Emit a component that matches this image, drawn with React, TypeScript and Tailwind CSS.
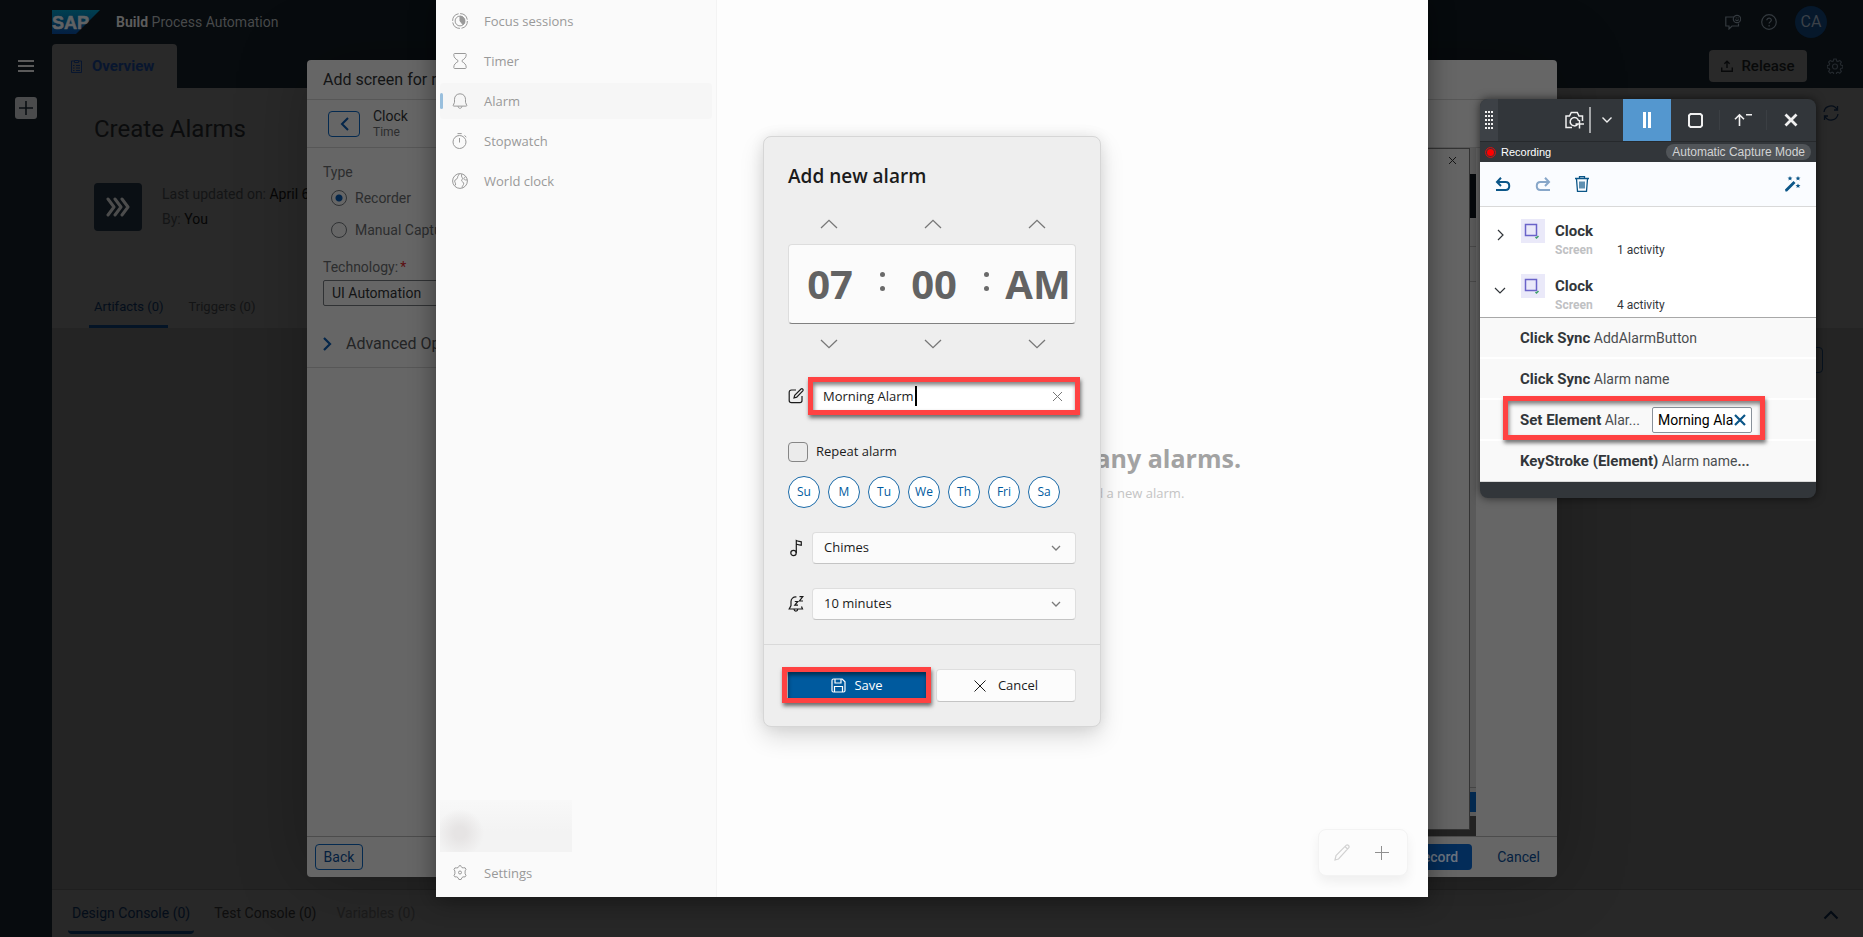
import React from "react";

type IconProps = { className?: string; w: number; h: number; sw?: number; fill?: boolean; children: React.ReactNode };

function Svg({ className = "", w, h, sw = 1, fill = false, children }: IconProps) {
  return (
    <svg
      aria-hidden="true"
      className={className}
      width={w}
      height={h}
      viewBox={`0 0 ${w} ${h}`}
      fill={fill ? "currentColor" : "none"}
      stroke={fill ? "none" : "currentColor"}
      strokeWidth={sw}
    >
      {children}
    </svg>
  );
}

const gearPath =
  "M6.8 1h2.4l.5 2 1.2.5 1.8-1.1 1.7 1.7-1.1 1.8.5 1.2 2 .5v2.4l-2 .5-.5 1.2 1.1 1.8-1.7 1.7-1.8-1.1-1.2.5-.5 2H6.8l-.5-2-1.2-.5-1.8 1.1-1.7-1.7 1.1-1.8-.5-1.2-2-.5V7.600l2-.5.5-1.200-1.100-1.800 1.700-1.700 1.800 1.100 1.200-.5z";

function SapLogo() {
  return (
    <svg width="48" height="24" viewBox="0 0 48 24" role="img" aria-label="SAP">
      <defs>
        <linearGradient id="sap" x1="0" y1="0" x2="0" y2="1">
          <stop offset="0" stopColor="#003f50" />
          <stop offset="1" stopColor="#041f42" />
        </linearGradient>
      </defs>
      <path d="M0 0H48L24 24H0Z" fill="url(#sap)" />
      <text x="0" y="19" fontFamily="Liberation Sans, Arial, sans-serif" fontWeight="700" fontSize="18" fill="#606264" stroke="#606264" strokeWidth=".6">
        SAP
      </text>
    </svg>
  );
}

function AppHeader() {
  return (
    <header className="flex h-[44px] items-center pr-[36px]">
      <SapLogo />
      <p className="ml-4 flex-1 text-sm text-[#484a4b]">
        <b className="text-[#5c5c5c]">Build</b> Process Automation
      </p>
      <div className="flex items-center text-[#343a3f]">
        <button aria-label="Feedback" className="mr-5">
          <Svg w={16} h={16} sw={1.2}>
            <path d="M9 3H.8v9H4v3l3-3h6.500V9.500" />
            <circle cx="12" cy="5" r="3.700" />
            <path d="M10.300 5.500c.8 1.500 2.600 1.500 3.400 0M10.800 3.900h.8M12.700 3.900h.8" />
          </Svg>
        </button>
        <button aria-label="Help" className="mr-[18px]">
          <Svg w={16} h={16} sw={1.2}>
            <circle cx="8" cy="8" r="7.300" />
            <path d="M5.800 6.300c0-3 4.600-2.900 4.500-.1 0 1.700-2.200 1.700-2.200 3.400M8.100 11v1.500" />
          </Svg>
        </button>
        <button className="h-8 w-8 rounded-full bg-[#06182b] text-base text-[#3b4148]">CA</button>
      </div>
    </header>
  );
}

function SideRail() {
  return (
    <nav className="flex w-[52px] shrink-0 flex-col items-center pt-[60px]">
      <button aria-label="Menu" className="text-[#5a5a5a]">
        <Svg w={16} h={12} fill>
          <path d="M0 0h16v2H0zM0 5h16v2H0zM0 10h16v2H0z" />
        </Svg>
      </button>
      <button aria-label="Create" className="mt-[25px] flex h-[22px] w-[22px] items-center justify-center rounded-[3px] bg-[#4a4b4c] text-[#0a0f13]">
        <Svg w={14} h={14} sw={1.600}>
          <path d="M7 0v14M0 7h14" />
        </Svg>
      </button>
    </nav>
  );
}

function ProjectPage() {
  return (
    <div className="flex min-h-screen bg-[#070b0e] font-['Roboto',sans-serif]">
      <SideRail />
      <div className="flex min-w-0 flex-1 flex-col">
        <AppHeader />
        <div className="flex h-[44px] items-center justify-between pr-5">
          <a href="#overview" className="flex h-full w-[125px] items-center gap-[10px] rounded-t-[4px] bg-[#292929] pl-[19px] text-[15px] font-bold text-[#08162f]">
            <Svg w={11} h={14}>
              <path d="M3 2H.5v11.500h10V2H8M3.500 1.500h4v2h-4zM5 6.500h4M5 9h4M5 11.500h4M2 6.500h1.500M2 9h1.500M2 11.500h1.500" />
            </Svg>
            Overview
          </a>
          <div className="flex items-center gap-5 text-[#23282d]">
            <button className="flex h-8 w-[98px] items-center justify-center gap-2 rounded-[4px] bg-[#292929] text-[15px] font-medium text-[#08090a]">
              <Svg w={12} h={12} sw={1.400}>
                <path d="M.7 7.500v3.800h10.600V7.500M6 8V1.200M3.400 3.800L6 1.200l2.600 2.600" />
              </Svg>
              Release
            </button>
            <button aria-label="Project settings">
              <Svg w={16} h={16} sw={1.200}>
                <path d={gearPath} />
                <circle cx="8" cy="8.500" r="2.500" />
              </Svg>
            </button>
          </div>
        </div>
        <main className="flex flex-1 flex-col bg-[#242424]">
          <section className="flex h-[240px] flex-col bg-[#292929] pl-[42px] pr-6">
            <div className="mt-[25px] flex items-start justify-between">
              <h1 className="text-2xl leading-8 text-[#0b0c0d]">Create Alarms</h1>
              <button aria-label="Refresh" className="-mt-2 text-[#060e19]">
                <Svg w={16} h={16} sw={1.300}>
                  <path d="M1 7a7 7 0 0 1 13-2.500M14.500 1v4H11M15 9a7 7 0 0 1-13 2.500M1.500 15v-4H5" />
                </Svg>
              </button>
            </div>
            <div className="mt-[38px] flex gap-5">
              <div className="flex h-12 w-12 items-center justify-center rounded-[4px] bg-[#0a0f14] text-[#4c4c4c]">
                <Svg w={26} h={20} sw={3}>
                  <path d="M3 2l6 8-6 8M10 2l6 8-6 8M17 2l6 8-6 8" strokeLinecap="round" strokeLinejoin="round" />
                </Svg>
              </div>
              <div className="text-sm leading-[25px] text-[#141516]">
                <p className="-mt-px">Last updated on: <span className="text-[#060606]">April 6, 2023</span></p>
                <p>By: <span className="text-[#060606]">You</span></p>
              </div>
            </div>
            <div className="mt-auto flex gap-5 text-[13px] leading-6 text-[#131415]">
              <a href="#artifacts" className="-ml-[5px] h-[33px] border-b-[3px] border-[#041426] px-[5px] text-[#040e1b]">Artifacts (0)</a>
              <a href="#triggers" className="h-[33px]">Triggers (0)</a>
            </div>
          </section>
          <div className="flex justify-end pr-10 pt-[19px]">
            <button aria-label="Create artifact" className="h-[26px] w-20 rounded-[4px] border border-[#07121f]" />
          </div>
        </main>
        <footer className="flex h-12 items-start gap-5 border-t border-[#1f1f1f] bg-[#282828] pl-[16px] pr-6 text-sm">
          <a href="#design" className="h-[44px] rounded-b-sm border-b-[3px] border-[#03111f] px-1 pt-[13px] text-[#040d19]">Design Console (0)</a>
          <a href="#test" className="pt-[13px] text-[#0e0e0e]">Test Console (0)</a>
          <span className="flex-1 pt-[13px] text-[#1b1b1b]">Variables (0)</span>
          <button aria-label="Expand console" className="mt-5 text-[#030a13]">
            <Svg w={16} h={10} sw={2}>
              <path d="M1.500 8.500L8 2l6.500 6.500" />
            </Svg>
          </button>
        </footer>
      </div>
    </div>
  );
}

function ScreenDialog() {
  return (
    <section
      aria-label="Add screen"
      className="absolute bottom-[60px] left-[307px] right-[306px] top-[60px] flex flex-col rounded-[4px] bg-[#666666] font-['Roboto',sans-serif] text-sm text-[#2c2d2e] shadow-[0_0_70px_rgba(0,0,0,0.25)]"
    >
      <h2 className="flex h-10 items-center border-b border-[#575757] pl-4 text-base text-[#131415]">Add screen for recorder</h2>
      <div className="flex h-12 items-center gap-[13px] border-b border-[#575757] pl-[21px]">
        <button aria-label="Previous" className="flex h-[26px] w-8 items-center justify-center rounded-[4px] border border-[#042a50] text-[#04264a]">
          <Svg w={9} h={14} sw={2}>
            <path d="M8 1L2 7l6 6" />
          </Svg>
        </button>
        <div>
          <p className="leading-4 text-[#131415]">Clock</p>
          <p className="text-xs leading-4">Time</p>
        </div>
      </div>
      <div className="flex min-h-0 flex-1">
        <div className="w-[420px]">
          <form className="flex h-[220px] flex-col border-b border-[#575757] pl-4 pt-[14px]">
            <p className="leading-5">Type</p>
            <label className="mt-2 flex h-4 items-center gap-2 pl-2">
              <input type="radio" name="type" defaultChecked className="h-4 w-4 appearance-none rounded-full border border-[#303234] bg-[radial-gradient(circle,#04264a_3px,transparent_4px)]" />
              Recorder
            </label>
            <label className="mt-4 flex h-4 items-center gap-2 pl-2">
              <input type="radio" name="type" className="h-4 w-4 appearance-none rounded-full border border-[#303234]" />
              Manual Capture
            </label>
            <label htmlFor="technology" className="mt-[19px] leading-5">
              Technology:<span className="ml-[2px] text-[#5b0d10]">*</span>
            </label>
            <select id="technology" className="mt-[3px] h-[26px] w-[300px] appearance-none rounded-[2px] border border-[#303234] pl-2 text-[#131415]">
              <option>UI Automation</option>
            </select>
            <button type="button" className="mt-[26px] flex items-center gap-[14px] text-base leading-6 text-[#232425]">
              <Svg w={9} h={16} sw={2.200} className="text-[#04264a]">
                <path d="M1 2l6 6-6 6" />
              </Svg>
              Advanced Options
            </button>
          </form>
        </div>
        <div className="mr-[81px] flex flex-1 bg-[#222222]">
          <div className="mb-[6px] flex flex-1 justify-end border-b border-r border-t border-[#333] bg-[#646464] pr-3 pt-[7px] text-[#151515]">
            <Svg w={9} h={9}>
              <path d="M1 1l7 7M8 1L1 8" />
            </Svg>
          </div>
          <div className="flex w-[6px] flex-col bg-[#5a5a5a]">
            <div className="h-[26px]" />
            <div className="h-[44px] bg-[#05080b]" />
            <div className="h-[29px] border-b border-[#484848]" />
            <div className="h-[35px] border-b border-[#484848]" />
            <div className="flex-1 border-b border-[#454545]" />
            <div className="my-1 h-5 bg-[#03294f]" />
            <div className="h-5 bg-[#222222]" />
          </div>
        </div>
      </div>
      <div className="flex h-[41px] items-center border-t border-[#4c4c4c] pb-1 pl-2 pr-2">
        <button className="mt-1 h-[26px] w-12 rounded-[4px] border border-[#042a50] text-[#04203f]">Back</button>
        <button className="ml-auto mt-1 h-[26px] w-[72px] rounded-[4px] bg-[#032c59] font-medium text-[#6b7480]">Record</button>
        <button className="ml-4 mt-1 h-[26px] w-[61px] text-[#04203f]">Cancel</button>
      </div>
    </section>
  );
}

const navItems = [
  {
    label: "Focus sessions",
    icon: (
      <Svg w={16} h={16}>
        <circle cx="8" cy="8" r="7.400" strokeDasharray="10 1.600" />
        <circle cx="8" cy="8" r="4.900" />
        <path d="M8 3.200a4.800 4.800 0 0 1 3 8.500L8 8z" fill="currentColor" />
      </Svg>
    ),
  },
  {
    label: "Timer",
    icon: (
      <Svg w={16} h={16}>
        <path d="M2.500.5h11c.5 0 .7.500.7 1 0 3-1.500 4.300-4.200 6v1c2.700 1.700 4.200 3 4.200 6 0 .5-.2 1-.7 1h-11c-.5 0-.7-.5-.7-1 0-3 1.500-4.300 4.200-6v-1c-2.700-1.700-4.200-3-4.200-6 0-.5.2-1 .7-1z" />
      </Svg>
    ),
  },
  {
    label: "Alarm",
    selected: true,
    icon: (
      <Svg w={16} h={16}>
        <path d="M8 .8c-3.300 0-5.500 2.400-5.500 5.500v3L1.200 12.500c0 .4.200.6.500.6h12.600c.3 0 .5-.2.5-.6L13.500 9.300v-3C13.500 3.200 11.300.8 8 .8zM6 13.200c.2 2.800 3.800 2.800 4 0" />
      </Svg>
    ),
  },
  {
    label: "Stopwatch",
    icon: (
      <Svg w={16} h={16}>
        <circle cx="7.500" cy="9" r="6.500" />
        <path d="M5.500.6h4.200M7.500 5v4.500M12.500 2.500l1.800 1.600" />
      </Svg>
    ),
  },
  {
    label: "World clock",
    icon: (
      <Svg w={16} h={16}>
        <circle cx="8" cy="8" r="7.400" />
        <path d="M7 .8c.5 1.500-1.700 2-1.500 4C5.300 6.500 3 6 2.700 8c-.2 1.300 1.300 2 .8 4.300M10 1c-.8 1.500-.6 2.500.3 3.800 1 1.200-1.300 2-.5 3.400.8 1.200 2.500.8 1.700 3.300-.4 1.100-1.500 1.500-1.300 3.300M13.500 3.800c-1 .5-2 1.200-1.500 2.400.5 1 2 .8 3.200.6" />
      </Svg>
    ),
  },
];

function Chevron({ up = false }: { up?: boolean }) {
  return (
    <Svg w={18} h={10} sw={1.300}>
      <path d={up ? "M1 9l8-7.700L17 9" : "M1 1l8 7.700L17 1"} />
    </Svg>
  );
}

function Spinners({ dir }: { dir: "Increase" | "Decrease" }) {
  return (
    <div className="grid grid-cols-[82px_22px_82px_22px_82px] text-[#777777]">
      {["hour", "minute", "period"].map((unit, i) => (
        <React.Fragment key={unit}>
          {i > 0 && <span />}
          <button type="button" aria-label={`${dir} ${unit}`} className="flex h-10 items-center justify-center">
            <Chevron up={dir === "Increase"} />
          </button>
        </React.Fragment>
      ))}
    </div>
  );
}

function Colon() {
  return (
    <span className="flex flex-col items-center gap-[9px] pb-1">
      <i className="h-[5px] w-[5px] rounded-full bg-[#6a6a6a]" />
      <i className="h-[5px] w-[5px] rounded-full bg-[#6a6a6a]" />
    </span>
  );
}

function Frame({ className }: { className: string }) {
  return (
    <span
      className={
        "pointer-events-none absolute border-[5px] border-[#ff4242] shadow-[1px_3px_4px_rgba(0,0,0,0.55),inset_1px_3px_4px_rgba(0,0,0,0.5)] " + className
      }
    />
  );
}

function DropDown({ label, value, icon }: { label: string; value: string; icon: React.ReactNode }) {
  return (
    <label className="flex items-center gap-2 text-[#1b1b1b]">
      {icon}
      <span className="relative flex flex-1 items-center">
        <select aria-label={label} className="h-8 w-full appearance-none rounded-[4px] border border-[#dedede] border-b-[#c4c4c4] bg-[#fbfbfb] pl-[11px]">
          <option>{value}</option>
        </select>
        <Svg w={10} h={6} sw={1.300} className="absolute right-[15px] text-[#7a7a7a]">
          <path d="M1 1l4 4 4-4" />
        </Svg>
      </span>
    </label>
  );
}

function AlarmDialog() {
  return (
    <form
      aria-label="Add new alarm"
      className="absolute left-1/2 top-[136px] w-[338px] -translate-x-1/2 rounded-lg border border-[#d6d6d6] bg-[#eeeeee] text-[13px] text-[#1b1b1b] shadow-[0_10px_24px_rgba(0,0,0,0.14),0_0_14px_rgba(0,0,0,0.08)]"
    >
      <div className="px-6 pb-6 pt-[25px]">
        <h2 className="text-[19px] font-semibold leading-7">Add new alarm</h2>
        <div className="mt-[14px]">
          <Spinners dir="Increase" />
        </div>
        <div className="grid h-20 grid-cols-[82px_22px_82px_22px_82px] items-center rounded-[4px] border border-[#dddddd] border-b-[#808080] bg-[#fbfbfb] pb-px text-center text-[40px] font-bold leading-none text-[#636363]">
          <span>07</span>
          <Colon />
          <span>00</span>
          <Colon />
          <span>AM</span>
        </div>
        <Spinners dir="Decrease" />
        <div className="mt-4 flex items-center gap-2">
          <Svg w={16} h={16} sw={1.200}>
            <path d="M8 2H3.500C2 2 1.200 2.800 1.200 4.200v8.300c0 1.400.8 2.200 2.300 2.200h8.300c1.400 0 2.200-.8 2.200-2.200V8M6 10l.7-2.800L13 1c1.300-.9 2.700.5 1.800 1.800L8.700 9.200z" />
          </Svg>
          <div className="relative flex h-8 flex-1 items-center bg-white pl-[11px]">
            <input aria-label="Alarm name" defaultValue="Morning Alarm" className="w-[94px] border-r-2 border-black bg-transparent leading-5 outline-none" />
            <button type="button" aria-label="Clear name" className="ml-auto mr-[13px] text-[#777]">
              <Svg w={11} h={11}>
                <path d="M1 1l9 9M10 1l-9 9" />
              </Svg>
            </button>
            <Frame className="-bottom-[3px] -left-1 -right-1 -top-[3px]" />
          </div>
        </div>
        <label className="mt-[30px] flex h-5 items-center gap-2">
          <input type="checkbox" className="h-5 w-5 appearance-none rounded-[4px] border border-[#868686] bg-[#ebebeb]" />
          Repeat alarm
        </label>
        <div className="mt-[14px] flex gap-2 text-xs text-[#005a9e]">
          {["Su", "M", "Tu", "We", "Th", "Fri", "Sa"].map((d) => (
            <button type="button" key={d} className="h-8 w-8 rounded-full border border-[#1a6aa8] bg-white">
              {d}
            </button>
          ))}
        </div>
        <div className="mt-6 flex flex-col gap-6">
          <DropDown
            label="Alarm sound"
            value="Chimes"
            icon={
              <Svg w={16} h={18} sw={1.200}>
                <circle cx="5.500" cy="14" r="2.700" />
                <path d="M8.300 14V1.500c1.500 1 3.200.6 5 1.200v3.500c-1.800-.6-3.500-.2-5-1.200" />
              </Svg>
            }
          />
          <DropDown
            label="Snooze time"
            value="10 minutes"
            icon={
              <Svg w={16} h={18} sw={1.200}>
                <path d="M8.500 2C5.200 1.600 3 4 3 6.500v4L1.200 14h13.300l-1-2.500M6 14.300c.2 2.400 3.600 2.400 3.800 0M6.800 6.500h3L6.800 10.200h3.200M11.500 1.700h3.300l-3.300 4.300h3.500" />
              </Svg>
            }
          />
        </div>
      </div>
      <div className="flex gap-[10px] border-t border-[#d9d9d9] px-6 py-6">
        <button type="button" className="relative flex h-[33px] flex-1 items-center justify-center gap-2 rounded-[4px] bg-[#005a9e] text-white">
          <Svg w={15} h={15} sw={1.200}>
            <path d="M1 2.500C1 1.500 1.500 1 2.500 1h8.700L14 3.800v8.700c0 1-.5 1.500-1.500 1.500h-10C1.500 14 1 13.500 1 12.500zM4 1v4h6V1M3.500 14V8.500h8V14" />
          </Svg>
          Save
          <Frame className="-bottom-[1px] -left-[6px] -right-[5px] -top-[2px]" />
        </button>
        <button type="button" className="flex h-[33px] flex-1 items-center justify-center gap-3 rounded-[4px] border border-[#dedede] border-b-[#c4c4c4] bg-[#fcfcfc]">
          <Svg w={12} h={12}>
            <path d="M.5.500l11 11M11.500.500l-11 11" />
          </Svg>
          Cancel
        </button>
      </div>
    </form>
  );
}

function ClockWindow() {
  return (
    <section
      aria-label="Clock"
      className="absolute bottom-10 left-[436px] right-[435px] top-0 flex bg-[#fdfdfd] font-['Open_Sans',sans-serif] shadow-[0_2px_24px_rgba(0,0,0,0.45)]"
    >
      <nav className="flex w-[281px] flex-col border-r border-[#f3f3f3] bg-[#fafafa] px-1 pt-[3px] text-[13px] text-[#999999]">
        <div className="flex flex-col gap-1">
          {navItems.map((n) => (
            <a
              key={n.label}
              href="#clock"
              className={n.selected ? "flex h-9 items-center rounded-[4px] bg-[#f6f6f6]" : "flex h-9 items-center rounded-[4px]"}
            >
              <span className={n.selected ? "mr-[9px] h-4 w-[3px] rounded-full bg-[#99bfdd]" : "mr-[9px] h-4 w-[3px]"} />
              {n.icon}
              <span className="ml-4 pt-px">{n.label}</span>
            </a>
          ))}
        </div>
        <div className="mt-auto h-[52px] w-[132px] bg-[radial-gradient(circle_at_20px_33px,#e6e4e4_6px,transparent_24px),linear-gradient(to_bottom,#f8f8f8,#f3f3f3_60%)]" />
        <a href="#settings" className="mb-[3px] flex h-[42px] items-center pl-3">
          <Svg w={16} h={16}>
            <path d="M6.800 1.500l.4-.8h1.600l.4.800.8 1.200 1.400.1 1.700 0 .9 1.600-.9 1.500v2.900l.9 1.500-.9 1.600H11l-1.100.8-.8 1.800H6.900l-.9-1.800-1.200-.8H2.900L2 10.400l.9-1.500V6L2 4.500l.9-1.600h1.800L6 2.700z" />
            <circle cx="8" cy="7.500" r="1.500" />
          </Svg>
          <span className="ml-4 pt-px">Settings</span>
        </a>
      </nav>
      <div className="flex flex-1 flex-col items-center pt-[440px]">
        <h2 className="text-[25px] font-bold leading-9 text-[#a3a3a3]">You don’t have any alarms.</h2>
        <p className="mt-[7px] text-[13px] leading-5 text-[#c4c4c4]">Select “+” button to add a new alarm.</p>
        <div className="mb-[21px] mr-5 mt-auto flex h-[47px] w-[90px] items-center justify-center gap-6 self-end rounded-lg border border-[#f3f3f3] bg-[#fcfcfc] pr-[3px] shadow-[0_6px_12px_rgba(0,0,0,0.06)]">
          <button aria-label="Edit alarms" className="text-[#d2d2d2]">
            <Svg w={17} h={17} sw={1.200}>
              <path d="M1 16l1-4.500L12.300 1.200c1.500-1 3.500 1 2.500 2.500L4.500 15zM11 2.500L13.500 5" />
            </Svg>
          </button>
          <button aria-label="Add an alarm" className="text-[#8f8f8f]">
            <Svg w={14} h={14}>
              <path d="M6.500 0v14M0 6.500h14" />
            </Svg>
          </button>
        </div>
      </div>
      <AlarmDialog />
    </section>
  );
}

function ScreenRow({ count, open = false }: { count: string; open?: boolean }) {
  return (
    <div className="flex h-[55px] items-start pl-3 pt-3">
      <button aria-label="Toggle screen" className="flex h-8 w-4 items-center justify-center">
        <Svg w={12} h={12} sw={1.200}>
          <path d={open ? "M1 4l5 5 5-5" : "M4 1l5 5-5 5"} />
        </Svg>
      </button>
      <div className="ml-[13px] h-6 w-6 bg-[#eae9f9]">
        <Svg w={24} h={24} sw={1.500}>
          <path d="M4.500 5.500h11v11h-11z" stroke="#6a63c9" />
          <path d="M14.500 18l1 1 2-2" stroke="#3fa06a" />
        </Svg>
      </div>
      <div className="ml-[10px]">
        <p className="text-[15px] font-bold leading-6">Clock</p>
        <p className="flex text-xs leading-[14px]">
          <b className="w-[62px] text-[#bfc1c3]">Screen</b>
          {count}
        </p>
      </div>
    </div>
  );
}

function Action({ name, target }: { name: string; target: React.ReactNode }) {
  return (
    <span className="text-sm leading-5">
      <b className="text-[15px] text-[#32363a]">{name}</b> {target}
    </span>
  );
}

function Recorder() {
  return (
    <section
      aria-label="Recorder"
      className="absolute right-[47px] top-[99px] w-[336px] overflow-hidden rounded-lg bg-[#32363a] font-['Roboto',sans-serif] text-[#32363a] shadow-[0_0_10px_rgba(0,0,0,0.6)]"
    >
      <div className="flex h-[42px] items-center pr-px text-[#f0f0f0]">
        <div className="flex h-full w-[18px] items-center justify-center bg-[#3d4146]">
          <Svg w={8} h={18} fill>
            {[0, 4, 8, 12, 16].map((y) => (
              <path key={y} d={`M0 ${y}h2v2H0zM3 ${y}h2v2H3zM6 ${y}h2v2H6z`} />
            ))}
          </Svg>
        </div>
        <button aria-label="Capture" className="ml-auto mr-[5px]">
          <Svg w={19} h={18} sw={1.500}>
            <path d="M7 16.500H1V5h3.500l1.800-3.500h6L14 5h3.500v5M12.500 13.500a4.200 4.200 0 1 1 1-3.700M10.500 13h8.500M14.500 9v8.500" />
          </Svg>
        </button>
        <span className="h-[26px] w-[2px] bg-[#a3a5a7]" />
        <button aria-label="Capture options" className="mx-[11px]">
          <Svg w={10} h={6} sw={1.400}>
            <path d="M.5.500L5 5 9.500.5" />
          </Svg>
        </button>
        <button aria-label="Pause" className="flex h-full w-12 items-center justify-center bg-[#5497cf] text-white">
          <Svg w={8} h={16} fill>
            <path d="M0 0h3v16H0zM5 0h3v16H5z" />
          </Svg>
        </button>
        <button aria-label="Stop" className="flex w-12 items-center justify-center">
          <Svg w={15} h={15} sw={2}>
            <path d="M2.500 1h10L14 2.500v10L12.500 14h-10L1 12.500v-10z" />
          </Svg>
        </button>
        <button aria-label="Minimize" className="flex h-5 w-12 items-center justify-center border-x border-[#3b3f43]">
          <Svg w={18} h={14} sw={1.600}>
            <path d="M5.500 13V2M1 6.300l4.500-4.500L10 6.300M12 1.800h6" />
          </Svg>
        </button>
        <button aria-label="Close" className="flex w-12 items-center justify-center">
          <Svg w={14} h={14} sw={2.800}>
            <path d="M1.500 1.500l11 11M12.500 1.500l-11 11" />
          </Svg>
        </button>
      </div>
      <div className="flex h-[21px] items-center border-t border-[#26292c] pl-[5px] pr-[5px] font-['Liberation_Sans',sans-serif] text-white">
        <Svg w={11} h={11}>
          <circle cx="5.500" cy="5.500" r="4.900" stroke="#e01010" />
          <circle cx="5.500" cy="5.500" r="3.500" fill="#ff0000" stroke="none" />
        </Svg>
        <span className="ml-[5px] text-[11px]">Recording</span>
        <span className="ml-auto flex h-4 items-center rounded-full bg-[#515559] px-[6px] text-xs text-[#d2d3d4]">Automatic Capture Mode</span>
      </div>
      <div className="flex h-[45px] items-center gap-6 border-b border-[#d9d9d9] bg-[#fafcff] pl-[15px] pr-[15px] text-[#0b5688]">
        <button aria-label="Undo">
          <Svg w={16} h={14} sw={2}>
            <path d="M1 13h9.500c5 0 5-8 0-8H2M6 .8L2 5l4 4" />
          </Svg>
        </button>
        <button aria-label="Redo" className="text-[#88a7c9]">
          <Svg w={16} h={14} sw={2}>
            <path d="M15 13H5.500c-5 0-5-8 0-8H14M10 .8L14 5l-4 4" />
          </Svg>
        </button>
        <button aria-label="Delete">
          <Svg w={14} h={16} sw={1.300}>
            <path d="M0 2.500h14M4.500 2V.7h5V2M1.500 3l1 12.300h9l1-12.300M5 5.500v7M7 5.500v7M9 5.500v7" />
          </Svg>
        </button>
        <button aria-label="Optimize" className="ml-auto">
          <Svg w={16} h={16} fill>
            <path d="M0 13.500L8.500 5l2 2L2 15.500H.500zM5 0l.7 1.600 1.800.1-1.400 1.100.4 1.700L5 3.600l-1.500.9.4-1.700L2.500 1.700l1.800-.1zM13 0l.7 1.600 1.800.1-1.400 1.100.4 1.700L13 3.600l-1.500.9.4-1.700-1.400-1.100 1.800-.1zM13 7.500l.7 1.600 1.800.1-1.400 1.100.4 1.700-1.500-.9-1.500.9.4-1.700-1.400-1.100 1.800-.1z" />
          </Svg>
        </button>
      </div>
      <div className="h-[111px] border-b border-[#a8a8a8] bg-white">
        <ScreenRow count="1 activity" />
        <ScreenRow count="4 activity" open />
      </div>
      <ul className="bg-[#f9f9f9] text-[#4a4d50]">
        <li className="flex h-[41px] items-center border-b-2 border-white pl-10">
          <Action name="Click Sync" target="AddAlarmButton" />
        </li>
        <li className="flex h-[41px] items-center border-b-2 border-white pl-10">
          <Action name="Click Sync" target="Alarm name" />
        </li>
        <li className="relative flex h-[41px] items-center border-b-2 border-white pl-10">
          <div className="w-[132px]">
            <Action name="Set Element" target="Alar..." />
          </div>
          <div className="flex h-[26px] w-[100px] items-center rounded-[2px] border border-[#89919a] bg-white pl-[5px] pr-1">
            <input aria-label="Element value" defaultValue="Morning Alarm" className="w-0 flex-1 bg-transparent text-sm text-black outline-none" />
            <button aria-label="Clear value" className="text-[#0b5688]">
              <Svg w={14} h={12} sw={2.200}>
                <path d="M2 1l10 10M12 1L2 11" />
              </Svg>
            </button>
          </div>
          <Frame className="-bottom-[1px] -top-1 left-[23px] right-[51px]" />
        </li>
        <li className="flex h-[41px] items-center border-b border-[#d9d9d9] pl-10">
          <Action name="KeyStroke (Element)" target={<>Alarm name<b>...</b></>} />
        </li>
      </ul>
      <div className="h-4" />
    </section>
  );
}

export default function App() {
  return (
    <div className="relative min-h-screen overflow-hidden">
      <ProjectPage />
      <ScreenDialog />
      <ClockWindow />
      <Recorder />
    </div>
  );
}
